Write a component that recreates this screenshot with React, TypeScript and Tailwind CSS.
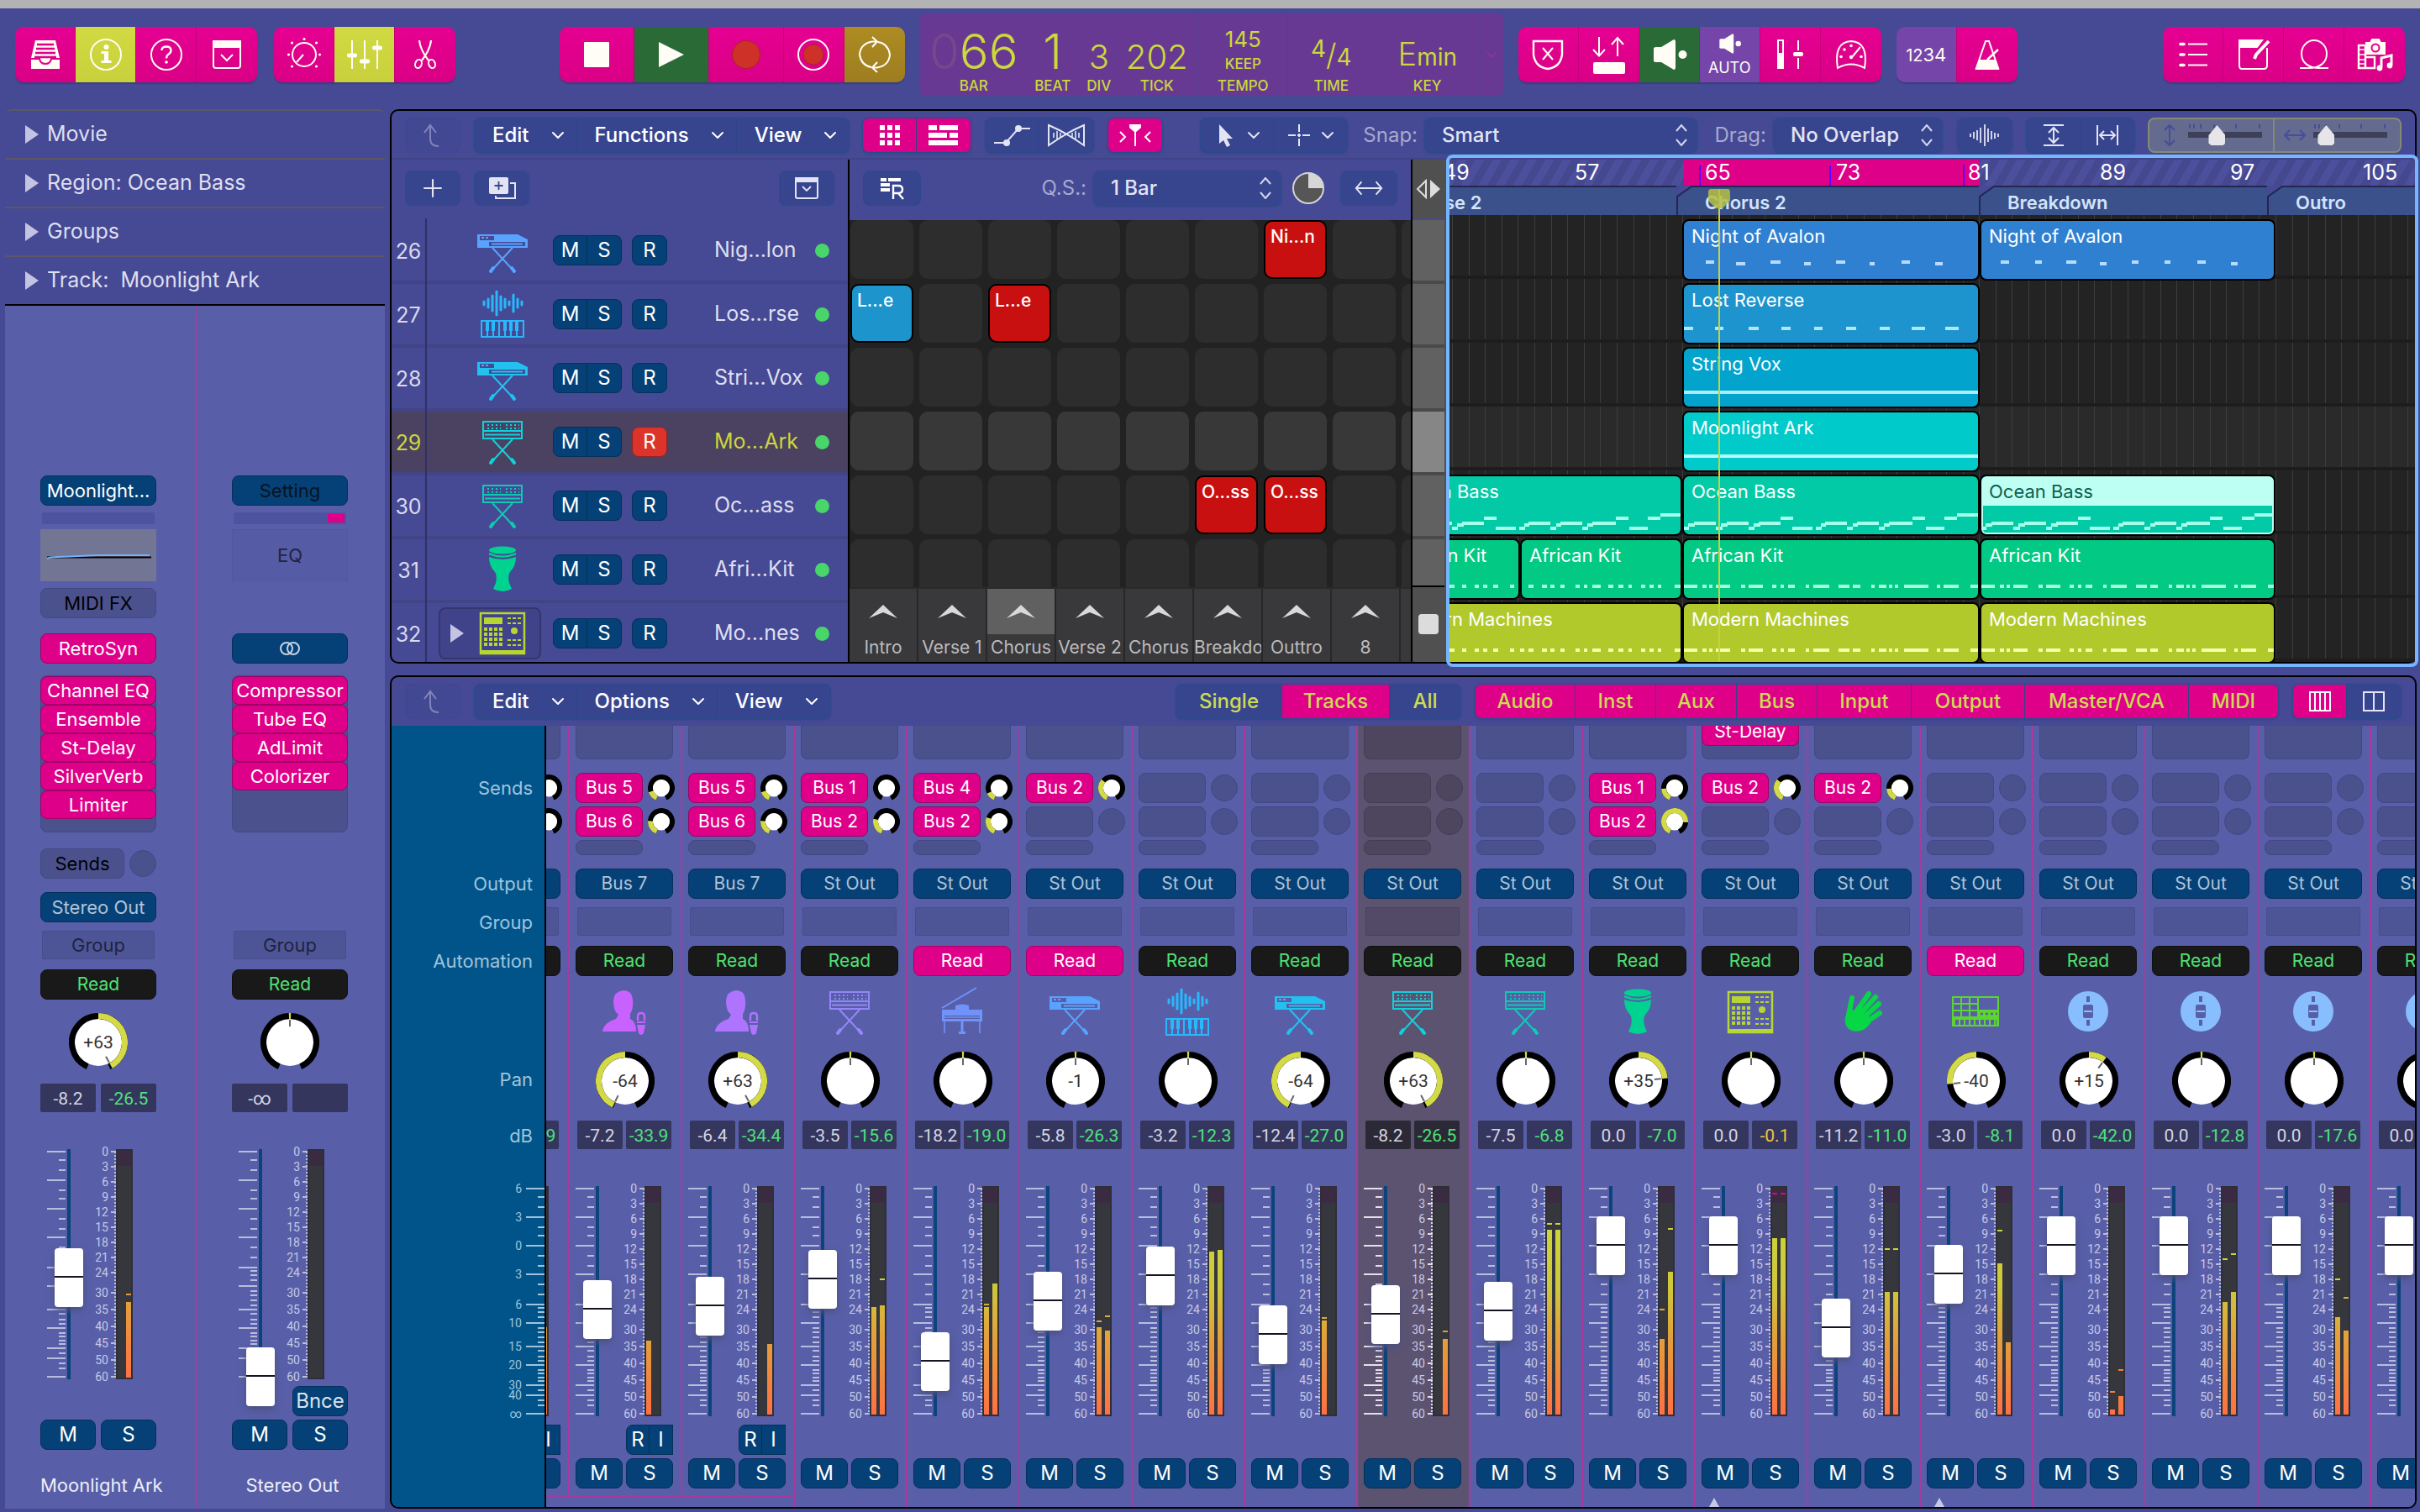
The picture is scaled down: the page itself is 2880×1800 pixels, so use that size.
import React from 'react';
import { ChevronDown, Plus } from 'lucide-react';
import clsx from 'clsx';

/* ---------- toolbar icons, 40x40 ---------- */

const glyphs: Record<string, React.ReactNode> = {
  library: (
    <>
      <path d="M8 3H32L37 24V37H3V24Z" fill="currentColor" stroke="none" />
      <path d="M10 8H30M9 13H31M8 18H32M7 23H33" stroke="#df0089" strokeWidth="2.4" />
      <path d="M3 25H13Q14 31 20 31Q26 31 27 25H37" stroke="#df0089" strokeWidth="2" />
    </>
  ),
  info: (
    <>
      <circle cx="20" cy="20" r="18" />
      <circle cx="20.5" cy="11" r="3" fill="currentColor" stroke="none" />
      <path d="M14.5 16H23V27H26.5V30H14.5V27H18V19H14.5Z" fill="currentColor" stroke="none" />
    </>
  ),
  help: (
    <>
      <circle cx="20" cy="20" r="18" />
      <path d="M14.5 15Q14.5 10.5 20 10.5Q25.5 10.5 25.5 15Q25.5 18 22 20Q20 21.5 20 24.5" strokeWidth="2.4" />
      <circle cx="20" cy="29" r="1.8" fill="currentColor" stroke="none" />
    </>
  ),
  panel: (
    <>
      <rect x="4" y="4" width="32" height="32" rx="3" />
      <path d="M4 4H36V11H4Z" fill="currentColor" />
      <path d="M13 20L20 27L27 20" />
    </>
  ),
  knob: (
    <>
      <circle cx="20" cy="20" r="14" />
      <path d="M19 20L11 29" />
      <g fill="currentColor" stroke="none">
        <circle cx="20" cy="1.5" r="1.6" /><circle cx="5.5" cy="6" r="1.6" /><circle cx="34.5" cy="6" r="1.6" />
        <circle cx="1.5" cy="20" r="1.6" /><circle cx="38.5" cy="20" r="1.6" />
        <circle cx="5.5" cy="34" r="1.6" /><circle cx="34.5" cy="34" r="1.6" />
      </g>
    </>
  ),
  mixer: (
    <>
      <path d="M5 3V37M20 3V37M35 3V37" />
      <rect x="-1" y="18.5" width="12" height="5" rx="2" fill="currentColor" stroke="none" />
      <rect x="14" y="25.5" width="12" height="5" rx="2" fill="currentColor" stroke="none" />
      <rect x="29" y="9.5" width="12" height="5" rx="2" fill="currentColor" stroke="none" />
    </>
  ),
  scissors: (
    <>
      <path d="M13 3Q14 14 24 27M27 3Q26 14 16 27" strokeWidth="2.2" />
      <ellipse cx="12" cy="31" rx="3.8" ry="5.2" transform="rotate(20 12 31)" />
      <ellipse cx="28" cy="31" rx="3.8" ry="5.2" transform="rotate(-20 28 31)" />
    </>
  ),
  stop: <rect x="5" y="5" width="30" height="30" rx="1" fill="currentColor" stroke="none" />,
  play: <path d="M5 5L35 20L5 35Z" fill="currentColor" stroke="none" />,
  record: <circle cx="20" cy="20" r="16.5" fill="#ce3127" stroke="#a8242c" strokeWidth="1" />,
  capture: (
    <>
      <circle cx="20" cy="20" r="18" />
      <circle cx="20" cy="20" r="12" fill="#ce3127" stroke="#a8242c" strokeWidth="1" />
    </>
  ),
  cycle: (
    <>
      <path d="M16 35Q4 33 2 20Q3 7 17 4.5H23M17 -1L23 4.5L17 11" />
      <path d="M24 5Q36 7 38 20Q37 33 23 35.5H17M23 29L17 35.5L23 41" />
    </>
  ),
  shield: (
    <>
      <path d="M3 4H37V20Q35 35 20 37Q5 35 3 20Z" strokeWidth="2.4" />
      <path d="M14 12L26 26M26 12L14 26" />
    </>
  ),
  replace: (
    <>
      <path d="M9 -1V21M2 14L9 21.5L16 14M31 22V0M24 8L31 0L38 8" />
      <rect x="2" y="29" width="38" height="14" rx="2" fill="currentColor" stroke="none" />
    </>
  ),
  speaker: (
    <>
      <path d="M2 13Q2 11 5 11H11L26 2Q28 2 28 5V35Q28 38 26 38L11 29H5Q2 29 2 27Z" fill="currentColor" stroke="none" />
      <circle cx="36.5" cy="20" r="5" fill="currentColor" stroke="none" />
    </>
  ),
  fader: (
    <>
      <rect x="6" y="3" width="6" height="33" />
      <path d="M6 19H12V36H6Z" fill="currentColor" />
      <path d="M30 3V15M30 24V37" />
      <rect x="24" y="17" width="12" height="5" rx="2" fill="currentColor" stroke="none" />
    </>
  ),
  gauge: (
    <>
      <path d="M4 36Q-1 5 20 4Q41 5 36 36Q20 27 4 36Z" />
      <path d="M21 23L31 11" />
      <g fill="currentColor" stroke="none">
        <circle cx="20" cy="9.5" r="1.8" /><circle cx="12" cy="14" r="1.8" /><circle cx="8" cy="22.5" r="1.8" />
        <circle cx="32" cy="22.5" r="1.8" /><circle cx="20" cy="23" r="2.2" />
      </g>
    </>
  ),
  metronome: (
    <>
      <path d="M18 4H22L33 36H7Z" />
      <path d="M11 27H29L33 37H7Z" fill="currentColor" />
      <path d="M20 26L33 14" strokeWidth="2.4" />
    </>
  ),
  list: (
    <>
      <path d="M14 7.5H37M14 20H37M14 32.5H37" />
      <path d="M5 7.5H9M5 20H9M5 32.5H9" strokeWidth="3.6" strokeLinecap="round" />
    </>
  ),
  notepad: (
    <>
      <path d="M36 12V33Q36 37 32 37H6Q3 37 3 33V6Q3 3 6 3H30" />
      <path d="M3 3H30L24 11H3Z" fill="currentColor" />
      <path d="M38 4L23 20L21 25" strokeWidth="4" />
    </>
  ),
  loop: <path d="M3 36H14C26 36 35 30 35 19A15 16 0 1 0 5 19C5 30 14 36 26 36H37" />,
  media: (
    <>
      <path d="M1 9H9V36H1ZM9 23H20V36H9" strokeWidth="2.4" />
      <path d="M1 14H9M1 20H9M1 26H9M1 31H9" strokeWidth="1.6" />
      <path d="M10 6H15L17 2H25L27 6H32V19H10Z" fill="currentColor" />
      <circle cx="21" cy="12" r="4.5" stroke="#df0089" strokeWidth="2" />
      <path d="M28 35V24L40 21V32" strokeWidth="3" />
      <circle cx="26" cy="36" r="3.4" fill="currentColor" stroke="none" />
      <circle cx="38" cy="33" r="3.4" fill="currentColor" stroke="none" />
    </>
  ),
  back: <path d="M17 9V24Q17 33 27 33M10 17L17 8L24 17" />,
  dots: (
    <path
      d="M8 8H14V14H8ZM17 8H23V14H17ZM26 8H32V14H26ZM8 17H14V23H8ZM17 17H23V23H17ZM26 17H32V23H26ZM8 26H14V32H8ZM17 26H23V32H17ZM26 26H32V32H26Z"
      fill="currentColor"
      stroke="none"
    />
  ),
  bricks: (
    <path
      d="M2 8H12V14H2ZM15 8H37V14H15ZM2 17H24V23H2ZM27 17H37V23H27ZM2 26H37V32H2Z"
      fill="currentColor"
      stroke="none"
    />
  ),
  automation: (
    <>
      <path d="M-2 29H12L27 12H41" />
      <circle cx="13" cy="29" r="4" fill="currentColor" stroke="none" />
      <circle cx="27" cy="12" r="4" fill="currentColor" stroke="none" />
    </>
  ),
  flex: (
    <>
      <path d="M-1 8Q20 17 41 32V8Q20 17 -1 32Z" />
      <path d="M5 17V23M9 15V25M13 17V23M27 17V23M31 15V25M35 17V23" strokeWidth="1.6" />
    </>
  ),
  catch: (
    <>
      <path d="M13 7H27V11L20 17L13 11Z" fill="currentColor" stroke="none" />
      <path d="M20 12V33M2 16L8 22L2 28M38 16L32 22L38 28" />
    </>
  ),
  pointer: <path d="M11 7V30L16 26L20 34L24 32L20 24H27Z" fill="currentColor" stroke="none" />,
  cross: <path d="M18 7V16M18 24V33M5 20H14M22 20H31M16 20H20M18 18V22" />,
  wave: <path d="M3 18V22M7 16V24M11 14V26M15 11V29M20 7V33M24 12V28M28 15V25M32 17V24M36 18V22" strokeWidth="1.8" />,
  fitV: <path d="M8 8H32M8 32H32M20 11V29M14 17L20 11L26 17M14 23L20 29L26 23" />,
  fitH: <path d="M8 8V32M32 8V32M11 20H29M16 15L11 20L16 25M24 15L29 20L24 25" />,
  duplicate: (
    <>
      <rect x="5" y="7" width="23" height="20" rx="2" fill="currentColor" stroke="none" />
      <path d="M16.5 12V22M11.5 17H21.5" stroke="#37458f" strokeWidth="1.8" />
      <path d="M30 14H36V32H13V29" />
    </>
  ),
  panelSmall: (
    <>
      <rect x="7" y="8" width="26" height="24" rx="2" />
      <path d="M7 8H33V12H7Z" fill="currentColor" />
      <path d="M15 18L20 23L25 18" strokeWidth="1.8" />
    </>
  ),
  ranger: (
    <>
      <path d="M6 8H13V12H6ZM15 8H30V12H15ZM6 14H17V18H6ZM6 20H17V24H6Z" fill="currentColor" stroke="none" />
      <path d="M21 33V17H27Q32 17 32 21.5Q32 26 27 26H21M27 26L33 33" strokeWidth="2.4" />
    </>
  ),
  arrows: <path d="M4 20H36M11 12L4 20L11 28M29 12L36 20L29 28" />,
  narrow: <path d="M8 9H32V31H8ZM14 9V31M20 9V31M26 9V31" />,
  wide: <path d="M8 9H32V31H8ZM20 9V31" />,
};

function Glyph({ name, size = 40 }: { name: string; size?: number }) {
  return (
    <svg width={size} height={size} viewBox="0 0 40 40" fill="none" stroke="currentColor" strokeWidth="2" className="shrink-0 overflow-visible">
      {glyphs[name]}
    </svg>
  );
}

/* ---------- instrument icons, 60x60 ---------- */

const stand = (
  <>
    <path d="M18 27L43 54M42 27L17 54" stroke="currentColor" strokeWidth="2" />
    <path d="M16 55L19 51M44 55L41 51" stroke="currentColor" strokeWidth="4" strokeLinecap="round" />
  </>
);

const instruments: Record<string, React.ReactNode> = {
  keyboard: (
    <>
      <path d="M0 11H48L60 17V27H0ZM14 20V25H57V20ZM3 13V18H20V13Z" fill="currentColor" fillRule="evenodd" />
      <path d="M5 15H8M10 15H13M17 22.5H54" stroke="currentColor" strokeWidth="2" />
      {stand}
    </>
  ),
  synth: (
    <>
      <path d="M7 6H53V26H7ZM7 17H53" stroke="currentColor" strokeWidth="2" />
      <path d="M12 10H28M34 10H50M12 14H28M34 14H50" stroke="currentColor" strokeWidth="2" strokeDasharray="2 3" />
      <path d="M9 21.5H51" stroke="currentColor" strokeWidth="2" />
      {stand}
    </>
  ),
  waveKeys: (
    <>
      <path d="M8 15V19M13 12V22M18 8V26M23 3V31M28 9V25M33 12V22M38 15V19M43 7V27M48 12V22M53 15V19" stroke="currentColor" strokeWidth="3" strokeLinecap="round" />
      <path d="M5 38H55V57H5ZM12 38V57M19 38V57M26 38V57M33 38V57M40 38V57M47 38V57" stroke="currentColor" strokeWidth="2" />
      <path d="M12 38V50M19 38V50M33 38V50M40 38V50M47 38V50" stroke="currentColor" strokeWidth="4" />
    </>
  ),
  djembe: (
    <>
      <ellipse cx="30" cy="7" rx="16" ry="4.5" fill="currentColor" />
      <path d="M14 10Q30 17 46 10V12.5Q30 19 14 12.5ZM14 15Q30 21 46 15Q46 26 39 33Q36 37 38 46L41 53Q30 59 19 53L22 46Q24 37 21 33Q14 26 14 15Z" fill="currentColor" />
    </>
  ),
  mpc: (
    <>
      <path d="M4 6H56V54H4Z" stroke="currentColor" strokeWidth="2.5" />
      <path d="M4 50H56V55H4ZM8 11H30V19H8Z" fill="currentColor" />
      <path d="M8 25H30M8 31H30M8 37H30M8 43H30" stroke="currentColor" strokeWidth="4" strokeDasharray="4 2" />
      <path d="M36 12H52M36 18H52M36 38H52M36 44H52" stroke="currentColor" strokeWidth="2" strokeDasharray="4 2" />
      <circle cx="44" cy="27" r="4" fill="currentColor" />
    </>
  ),
  piano: (
    <>
      <path d="M6 25L47 1" stroke="currentColor" strokeWidth="2" />
      <path d="M6 27H22V22Q30 19 38 22V27H54V41H6ZM9 34V38H51V34Z" fill="currentColor" fillRule="evenodd" />
      <path d="M9 36H51M9 41V55M51 41V55" stroke="currentColor" strokeWidth="1.6" />
      <path d="M30 41V54M26 54.5H34" stroke="currentColor" strokeWidth="3" />
    </>
  ),
  singer: (
    <>
      <path d="M29 4Q39 4 40 15Q41 26 37 32V38Q44 41 44 53H4Q5 43 20 38L23 33Q17 29 17 16Q18 5 29 4Z" fill="currentColor" />
      <path d="M46 40V35Q46 31 50 31Q54 31 54 35V40" stroke="currentColor" strokeWidth="2.4" />
      <path d="M45 41H55V43H45ZM45 45H55L53 55Q50 59 47 55Z" fill="currentColor" />
    </>
  ),
  hand: (
    <>
      <path d="M9 36Q13 28 20 27L32 33L42 37Q38 48 28 52Q15 55 10 46Q8 42 9 36Z" fill="currentColor" />
      <path d="M12 38L17 13M21 31L37 8M26 33L45 12M30 37L49 20M32 43L50 31" stroke="currentColor" strokeWidth="6" strokeLinecap="round" />
    </>
  ),
  drumGrid: (
    <>
      <path d="M3 12H57V46H3ZM13 12V35M23 12V35M33 12V35M3 20H33M3 28H57M3 36H57" stroke="currentColor" strokeWidth="2" />
      <path d="M33 28H57V37H33ZM3 35H57V46H3Z" fill="currentColor" />
      <path d="M6 42H55" stroke="#585fa8" strokeWidth="6" strokeDasharray="4 2" />
      <path d="M36 32H56" stroke="#585fa8" strokeWidth="2.5" strokeDasharray="3 3" />
    </>
  ),
  channel: (
    <>
      <circle cx="30" cy="29" r="24" fill="currentColor" />
      <path d="M28 11H32V18H28ZM28 39H32V46H28Z" fill="#585fa8" />
      <rect x="24" y="21" width="12" height="16" rx="2" fill="#585fa8" />
      <path d="M25 29H35" stroke="currentColor" strokeWidth="2" />
    </>
  ),
};

function Instrument({ name, color }: { name: string; color: string }) {
  return (
    <svg width="60" height="60" viewBox="0 0 60 60" fill="none" style={{ color }}>
      {instruments[name]}
    </svg>
  );
}

/* ---------- small shared controls ---------- */

const toolTones: Record<string, string> = {
  pink: 'bg-gradient-to-b from-[#e60092] to-[#d90085]',
  lime: 'bg-gradient-to-b from-[#d1da42] to-[#c8d13b]',
  green: 'bg-[#296a37]',
  gold: 'bg-gradient-to-b from-[#ae8c23] to-[#9d7d1f]',
  purple: 'bg-[#7645a9]',
};

function Tool({ icon, tone = 'pink', wide, label, children }: { icon?: string; tone?: string; wide?: boolean; label: string; children?: React.ReactNode }) {
  return (
    <button
      aria-label={label}
      className={clsx(
        'flex h-full flex-col items-center justify-center border-r border-[#c40079] text-[#fffdf5] last:border-r-0',
        wide ? 'w-[89px]' : 'w-[72px]',
        toolTones[tone],
      )}
    >
      {icon && <Glyph name={icon} />}
      {children}
    </button>
  );
}

function ToolGroup({ children }: { children: React.ReactNode }) {
  return <div className="flex h-[66px] shrink-0 overflow-hidden rounded-[10px] shadow-[0_2px_1px_#3a3d80]">{children}</div>;
}

function BarGroup({ children }: { children: React.ReactNode }) {
  return (
    <div className="flex h-[42px] shrink-0 divide-x divide-[#2d4587] overflow-hidden rounded-lg border border-[#2c4a8b] bg-[#37458f] text-[#e3e4f3] shadow-[0_1px_2px_#2c4a8b]">
      {children}
    </div>
  );
}

function BarButton({ icon, on, label }: { icon: string; on?: boolean; label: string }) {
  return (
    <button aria-label={label} className={clsx('flex w-16 items-center justify-center', on && 'bg-[#df0089] text-white')}>
      <Glyph name={icon} />
    </button>
  );
}

function MenuButton({ text }: { text: string }) {
  return (
    <button className="flex items-center gap-[22px] pr-[10px] pl-[21px] text-2xl font-medium text-white">
      {text}
      <ChevronDown size={24} strokeWidth={2} />
    </button>
  );
}

function UpDown() {
  return (
    <svg width="16" height="26" viewBox="0 0 16 26" fill="none" stroke="#d4d6ee" strokeWidth="2" className="pointer-events-none absolute top-2 right-[11px]">
      <path d="M2 8L8 1L14 8M2 18L8 25L14 18" />
    </svg>
  );
}

function Picker({ label, id, value, className }: { label: string; id: string; value: string; className: string }) {
  return (
    <>
      <label htmlFor={id} className="mr-2 text-2xl whitespace-nowrap text-[#a7a9d0]">{label}</label>
      <div className={clsx('relative h-[42px]', className)}>
        <select id={id} className="h-full w-full appearance-none rounded-lg border border-[#2c4a8b] bg-[#37458f] pl-[20px] text-2xl font-medium text-[#e3e4f3] shadow-[0_1px_2px_#2c4a8b]">
          <option>{value}</option>
        </select>
        <UpDown />
      </div>
    </>
  );
}

/* ---------- control bar ---------- */

function LcdCell({ value, label, className, big }: { value: React.ReactNode; label: string; className: string; big?: boolean }) {
  return (
    <div className={clsx('flex flex-col items-center justify-end pb-[2px]', className)}>
      <span className={clsx('whitespace-nowrap', big ? 'text-[58px] leading-[58px] font-light' : 'text-[40px] leading-[44px] font-light')}>{value}</span>
      <span className="mt-[2px] text-[17px] leading-5 font-medium">{label}</span>
    </div>
  );
}

function ControlBar() {
  return (
    <header className="flex h-[110px] items-center px-[18px]">
      <ToolGroup>
        <Tool icon="library" label="Library" />
        <Tool icon="info" tone="lime" label="Inspector" />
        <Tool icon="help" label="Quick Help" />
        <Tool icon="panel" label="Toolbar" />
      </ToolGroup>
      <div className="w-5" />
      <ToolGroup>
        <Tool icon="knob" label="Smart Controls" />
        <Tool icon="mixer" tone="lime" label="Mixer" />
        <Tool icon="scissors" label="Editors" />
      </ToolGroup>
      <div className="grow-[5]" />
      <ToolGroup>
        <Tool icon="stop" wide label="Stop" />
        <Tool icon="play" tone="green" wide label="Play" />
        <Tool icon="record" wide label="Record" />
        <Tool icon="capture" label="Capture" />
        <Tool icon="cycle" tone="gold" label="Cycle" />
      </ToolGroup>
      <div className="ml-[18px] flex h-[98px] rounded-md bg-[#673993] text-[#ccd83b]">
        <div className="flex border-r border-[#5a3c92] pl-[5px]">
          <LcdCell big className="w-[118px]" value={<><span className="text-[#77478b]">0</span>66</>} label="BAR" />
          <LcdCell big className="w-[70px]" value="1" label="BEAT" />
          <LcdCell className="w-10" value="3" label="DIV" />
          <LcdCell className="w-[98px]" value="202" label="TICK" />
        </div>
        <div className="flex w-[106px] flex-col items-center justify-end border-r border-[#5a3c92] pb-[2px] text-[17px] leading-5 font-medium">
          <span className="text-[26px] leading-[28px] font-normal">145</span>
          <span className="mt-[5px]">KEEP</span>
          <span className="mt-[6px]">TEMPO</span>
        </div>
        <LcdCell
          className="w-[104px] border-r border-[#5a3c92]"
          value={<span className="text-[28px] font-normal"><span className="align-super">4</span><span className="text-[36px] font-light">/</span>4</span>}
          label="TIME"
        />
        <LcdCell className="w-[125px] border-r border-[#5a3c92]" value={<span className="text-[38px]">E<span className="text-[28px] font-normal">min</span></span>} label="KEY" />
        <button aria-label="Display mode" className="flex w-[27px] items-center justify-center text-[#9a2f9d]">
          <ChevronDown size={20} />
        </button>
      </div>
      <div className="w-[18px]" />
      <ToolGroup>
        <Tool icon="shield" label="Low Latency" />
        <Tool icon="replace" label="Replace" />
        <Tool icon="speaker" tone="green" label="Input Monitoring" />
        <Tool tone="purple" label="Auto Input Monitoring">
          <Glyph name="speaker" size={26} />
          <span className="mt-[6px] text-lg leading-5">AUTO</span>
        </Tool>
        <Tool icon="fader" label="Solo" />
        <Tool icon="gauge" label="Tuner" />
      </ToolGroup>
      <div className="w-[18px]" />
      <ToolGroup>
        <Tool tone="purple" label="Count In"><span className="text-[22px]"><span className="text-xl">12</span>34</span></Tool>
        <Tool icon="metronome" label="Metronome" />
      </ToolGroup>
      <div className="grow-[7]" />
      <ToolGroup>
        <Tool icon="list" label="List Editors" />
        <Tool icon="notepad" label="Note Pads" />
        <Tool icon="loop" label="Apple Loops" />
        <Tool icon="media" label="Browsers" />
      </ToolGroup>
    </header>
  );
}

/* ---------- channel strip parts ---------- */

function arc(c: number, r: number, from: number, to: number) {
  const point = (deg: number) => {
    const rad = ((deg - 90) * Math.PI) / 180;
    return `${(c + r * Math.cos(rad)).toFixed(2)} ${(c + r * Math.sin(rad)).toFixed(2)}`;
  };
  return `M${point(from)}A${r} ${r} 0 ${to - from > 180 ? 1 : 0} 1 ${point(to)}`;
}

function PanKnob({ value = 0 }: { value?: number }) {
  const angle = (value / 64) * 154;
  const small = Math.abs(value) < 2;
  return (
    <div className="relative h-[70px] w-[70px]">
      <svg width="70" height="70" viewBox="0 0 70 70" fill="none">
        <circle cx="35" cy="35" r="28" fill="#fff" />
        <path d={arc(35, 31.5, -156, 156)} stroke="#000" strokeWidth="7" />
        <path d={small ? arc(35, 31.5, -2, 2) : arc(35, 31.5, Math.min(0, angle), Math.max(0, angle))} stroke="#d4da46" strokeWidth="7" />
        <path d="M35 8V16" stroke="#666" strokeWidth="2" transform={`rotate(${small ? 0 : angle} 35 35)`} />
      </svg>
      {value !== 0 && (
        <span className="absolute inset-0 flex items-center justify-center pt-[2px] font-['Roboto',sans-serif] text-[21px] text-[#333]">
          {value > 0 ? `+${value}` : value}
        </span>
      )}
    </div>
  );
}

function SendKnob({ level }: { level: number }) {
  return (
    <svg width="32" height="32" viewBox="0 0 32 32" fill="none">
      <circle cx="16" cy="16" r="10.5" fill="#fff" />
      <path d={arc(16, 13, -156, 156)} stroke="#000" strokeWidth="6" />
      {level > 0 && <path d={arc(16, 13, -156, -156 + level * 312)} stroke="#d4da46" strokeWidth="6" />}
    </svg>
  );
}

const longTicks = [3, 37, 71, 105, 141, 163, 191, 213, 237, 249, 271];
const shortTicks = [13, 25, 49, 59, 83, 95, 117, 129, 145, 150, 156, 169, 174, 180, 186, 196, 203, 208, 219, 223, 228, 232, 243, 255, 261];
const meterScale: [string, number][] = [
  ['0', 3], ['3', 21], ['6', 39], ['9', 57], ['12', 75], ['15', 93], ['18', 111], ['21', 129],
  ['24', 147], ['30', 171], ['35', 191], ['40', 211], ['45', 231], ['50', 251], ['60', 271],
];

type Meter = { l?: number; r?: number; pl?: number; pr?: number; clip?: boolean };

function levelColor(y: number) {
  return y < 120 ? '#ccd33b' : y < 170 ? '#dcae38' : y < 215 ? '#e39a3c' : '#f07f40';
}

function Fader({ line, meter, bright, name }: { line: number; meter: Meter; bright?: boolean; name: string }) {
  const tick = bright ? '#e4dfe9' : '#b9bddd';
  return (
    <div className="relative h-[274px]">
      <svg width="102" height="274" viewBox="0 0 102 274" className="block overflow-visible">
        <defs>
          <linearGradient id="level" gradientUnits="userSpaceOnUse" x1="0" y1="40" x2="0" y2="272">
            <stop offset="0" stopColor="#cbd63b" />
            <stop offset=".35" stopColor="#cfc73b" />
            <stop offset=".6" stopColor="#e2a13b" />
            <stop offset="1" stopColor="#ff7043" />
          </linearGradient>
        </defs>
        {longTicks.map((y) => <rect key={y} x="0" y={y - 1} width="22" height="2" fill={tick} />)}
        {shortTicks.map((y) => <rect key={y} x="14" y={y - 1} width="8" height="2" fill={tick} />)}
        <rect x="24" y="0" width="4" height="274" fill="#0b437a" />
        <path d="M81 3V272" stroke={tick} strokeWidth="2" strokeDasharray="2 2" />
        {meterScale.map(([text, y]) => (
          <g key={text}>
            <rect x="76" y={y - 1} width="6" height="2" fill={tick} />
            <text x="73" y={y + 5} textAnchor="end" fontSize="14" fill="#c6c9e6" fontFamily="Roboto, sans-serif">{text}</text>
          </g>
        ))}
        <rect x="82" y="0" width="20" height="274" fill="#2f2f37" />
        <rect x="84" y="2" width="16" height="18" fill="#3a2b42" />
        <rect x="84" y="20" width="16" height="252" fill="#36363d" />
        {meter.l !== undefined && <rect x="84" y={meter.l} width="6" height={272 - meter.l} fill="url(#level)" />}
        {meter.r !== undefined && <rect x="94" y={meter.r} width="6" height={272 - meter.r} fill="url(#level)" />}
        {meter.pl !== undefined && <rect x="84" y={meter.pl - 1} width="6" height="2" fill={meter.clip ? '#df0089' : levelColor(meter.pl)} />}
        {meter.pr !== undefined && <rect x="94" y={meter.pr - 1} width="6" height="2" fill={meter.clip ? '#df0089' : levelColor(meter.pr)} />}
      </svg>
      {/* the thumb travels past both ends of the scale */}
      <input
        type="range"
        aria-label={`${name} volume`}
        min={0}
        max={272}
        defaultValue={273 - line}
        className="absolute -top-8 left-[9px] h-[342px] w-[34px] appearance-none bg-transparent [direction:rtl] [writing-mode:vertical-lr] [&::-webkit-slider-thumb]:h-[70px] [&::-webkit-slider-thumb]:w-[34px] [&::-webkit-slider-thumb]:appearance-none [&::-webkit-slider-thumb]:rounded [&::-webkit-slider-thumb]:bg-[linear-gradient(#fff_33px,#151525_33px,#151525_35px,#fff_35px)] [&::-webkit-slider-thumb]:shadow-[0_4px_8px_#4b507f]"
      />
    </div>
  );
}

function ReadButton({ pink }: { pink?: boolean }) {
  return (
    <button className={clsx('h-9 w-full rounded-lg border text-[21px]', pink ? 'border-[#a80068] bg-[#df0089] text-white' : 'border-[#111] bg-[#191919] text-[#4fe273]')}>
      Read
    </button>
  );
}

const navy = 'h-9 rounded-lg border border-[#04305c] bg-[#054176]';
const emptyBox = 'rounded-lg border border-[#434884] bg-[#4a518d]';
const emptyBoxOn = 'rounded-lg border border-[#433d54] bg-[#4d465e]';
const pinkSlot = 'flex items-center justify-center rounded-lg border border-[#a00064] bg-[#df0089] whitespace-nowrap text-white';

function Readouts({ db, peak, hot, on, gap }: { db: string; peak: string; hot?: boolean; on?: boolean; gap: string }) {
  const box = clsx("flex-1 rounded-xs text-center leading-9 font-['Roboto',sans-serif] text-[21px]", on ? 'bg-[#2c2936]' : 'bg-[#34365e]');
  return (
    <div className={clsx('flex h-[34px]', gap)}>
      <span className={clsx(box, 'text-[#d4d5e2]')}>{db}</span>
      <span className={clsx(box, hot ? 'text-[#efc344]' : 'text-[#4fe17c]')}>{peak}</span>
    </div>
  );
}

/* ---------- inspector ---------- */

function InspectorStrip({ name, first, setting, inserts, pan, db, peak, line, meter }: {
  name: string; first?: boolean; setting: string; inserts: string[]; pan: number; db: string; peak: string; line: number; meter: Meter;
}) {
  return (
    <div className={clsx('flex w-1/2 flex-col pt-[202px] pl-[42px] text-[22px]', !first && 'border-l-2 border-[#a83a9d]')}>
      <button className={clsx(navy, 'w-[138px]', first ? 'text-white' : 'text-[#061322]')}>{setting}</button>
      <div className="mx-[2px] mt-[8px] flex h-[14px] w-[134px] justify-end rounded-xs bg-[#4e53a0] p-[2px]">
        {!first && <span className="w-5 bg-[#df0089]" />}
      </div>
      {first ? (
        <div className="mt-[6px] h-[62px] w-[138px] bg-[#737595]">
          <svg width="138" height="62" viewBox="0 0 138 62" fill="none">
            <path d="M8 33.5H132" stroke="#000" strokeWidth="2" />
            <path d="M8 35Q12 33 20 33C50 33 50 31 70 31H130" stroke="#73b2f8" strokeWidth="2" />
          </svg>
        </div>
      ) : (
        <button className="mt-[6px] h-[62px] w-[138px] border border-[#5157a0] bg-[#555ba4] text-[#22243f]">EQ</button>
      )}
      {first ? <button className={clsx(emptyBox, 'mt-2 h-9 w-[138px] text-black')}>MIDI FX</button> : <div className="mt-2 h-9" />}
      {first ? (
        <button className={clsx(pinkSlot, 'mt-[18px] h-9 w-[138px]')}>RetroSyn</button>
      ) : (
        <button aria-label="Stereo format" className={clsx(navy, 'mt-[18px] flex w-[138px] items-center justify-center')}>
          <svg width="26" height="18" viewBox="0 0 26 18" fill="none" stroke="#c4d2e4" strokeWidth="2">
            <circle cx="9" cy="9" r="7" /><circle cx="17" cy="9" r="7" />
          </svg>
        </button>
      )}
      <div className={clsx(emptyBox, 'mt-[14px] flex h-[187px] w-[138px] flex-col')}>
        {inserts.map((insert) => <button key={insert} className={clsx(pinkSlot, '-mx-px h-[34px]')}>{insert}</button>)}
      </div>
      {first ? (
        <div className="mt-[19px] flex h-9 w-[138px] items-center justify-between">
          <button className={clsx(emptyBox, 'h-9 w-[100px] text-black')}>Sends</button>
          <span className="h-8 w-8 rounded-full border border-[#434884] bg-[#4a518d]" />
        </div>
      ) : <div className="mt-[19px] h-9" />}
      {first ? <button className={clsx(navy, 'mt-4 w-[138px] text-[#b1c3d8]')}>Stereo Out</button> : <div className="mt-4 h-9" />}
      <button className="mx-[2px] mt-[10px] h-[34px] w-[134px] rounded-xs border border-[#474d8c] bg-[#4e5597] text-[#202340]">Group</button>
      <div className="mt-3 w-[138px]"><ReadButton /></div>
      <div className="mt-4 flex w-[138px] justify-center"><PanKnob value={pan} /></div>
      <div className="mt-[14px] w-[138px]"><Readouts db={db} peak={peak} gap="gap-[6px]" /></div>
      <div className="mt-11 pl-2"><Fader line={line} meter={meter} name={name} /></div>
      <div className="mt-2 flex h-9 w-[138px] justify-end">
        {!first && <button className={clsx(navy, 'w-[66px] text-2xl text-[#dbe3ec]')}>Bnce</button>}
      </div>
      <div className="mt-1 flex w-[138px] gap-[6px] text-2xl text-white">
        <button className={clsx(navy, 'flex-1')}>M</button>
        <button className={clsx(navy, 'flex-1')}>S</button>
      </div>
      <p className="mt-[26px] w-[144px] text-center leading-8 whitespace-nowrap text-[#eceef9]">{name}</p>
    </div>
  );
}

function Inspector() {
  return (
    <aside className="flex w-[452px] shrink-0 flex-col">
      {['Movie', 'Region: Ocean Bass', 'Groups', 'Track:  Moonlight Ark'].map((title) => (
        <button key={title} className="flex h-[58px] items-center gap-[10px] border-t-2 border-[#5b5768] pl-6 text-left text-[25px] whitespace-pre text-[#dedff0] first:rounded-t-lg">
          <svg width="16" height="22" viewBox="0 0 16 22" fill="#c3c4e4"><path d="M0 0L16 11L0 22Z" /></svg>
          {title}
        </button>
      ))}
      <div className="flex flex-1 border-t-2 border-black bg-[#585fa8]">
        <InspectorStrip
          first
          name="Moonlight Ark"
          setting="Moonlight..."
          inserts={['Channel EQ', 'Ensemble', 'St-Delay', 'SilverVerb', 'Limiter']}
          pan={63}
          db="-8.2"
          peak="-26.5"
          line={151}
          meter={{ r: 182, pr: 173 }}
        />
        <InspectorStrip
          name="Stereo Out"
          setting="Setting"
          inserts={['Compressor', 'Tube EQ', 'AdLimit', 'Colorizer']}
          pan={0}
          db="-∞"
          peak=""
          line={269}
          meter={{}}
        />
      </div>
    </aside>
  );
}

/* ---------- tracks area ---------- */

const tracks = [
  { n: 26, name: 'Nig...lon', icon: 'keyboard', color: '#58a3ff' },
  { n: 27, name: 'Los...rse', icon: 'waveKeys', color: '#29b8fb' },
  { n: 28, name: 'Stri...Vox', icon: 'keyboard', color: '#22c1ef' },
  { n: 29, name: 'Mo...Ark', icon: 'synth', color: '#12d0dc', selected: true },
  { n: 30, name: 'Oc...ass', icon: 'synth', color: '#11c9b3' },
  { n: 31, name: 'Afri...Kit', icon: 'djembe', color: '#00d390' },
  { n: 32, name: 'Mo...nes', icon: 'mpc', color: '#b8d631', stack: true },
];

const cells: Record<string, { text: string; blue?: boolean }> = {
  '0-6': { text: 'Ni...n' },
  '1-0': { text: 'L...e', blue: true },
  '1-2': { text: 'L...e' },
  '4-5': { text: 'O...ss' },
  '4-6': { text: 'O...ss' },
};

const scenes = ['Intro', 'Verse 1', 'Chorus', 'Verse 2', 'Chorus', 'Breakdown', 'Outtro', '8'];

/* note = [x, width, y] inside a region */
type Note = [number, number, number];
const avalonA: Note[] = [[28, 10, 47], [64, 11, 49], [105, 12, 47], [145, 8, 49], [183, 11, 47], [223, 6, 49], [261, 10, 47], [301, 9, 49]];
const avalonB: Note[] = [[25, 10, 47], [66, 8, 47], [103, 12, 47], [143, 8, 49], [181, 8, 47], [220, 7, 47], [259, 10, 47], [299, 8, 49]];
const lost: Note[] = [[0, 13, 50], [39, 10, 50], [79, 12, 50], [118, 11, 50], [157, 10, 50], [195, 12, 50], [235, 12, 50], [273, 16, 50], [313, 16, 50]];
const held: Note[] = [[0, 352, 50]];
const ocean: Note[] = [
  [0, 8, 60], [7, 8, 56], [14, 26, 54], [40, 8, 60], [46, 8, 56], [53, 26, 54], [79, 7, 60], [85, 8, 56], [91, 26, 54], [117, 15, 48],
  [131, 24, 60], [159, 7, 60], [165, 6, 56], [170, 26, 54], [196, 7, 60], [203, 6, 56], [208, 26, 54], [234, 7, 60], [240, 7, 56], [246, 28, 54],
  [274, 15, 48], [290, 22, 60], [312, 15, 48], [327, 25, 44],
];
const hits: Note[] = [
  [0, 18], [24, 5], [32, 4], [40, 17], [70, 5], [79, 17], [107, 5], [117, 4], [126, 8], [147, 4], [156, 19], [186, 13], [203, 9],
  [225, 4], [234, 9], [246, 4], [253, 4], [264, 29], [303, 4], [311, 18], [343, 9],
].map(([x, w]) => [x, w, 53]);
const ghosts: Note[] = [
  [76, 6], [91, 5], [106, 5], [116, 5], [128, 6], [148, 5], [160, 5], [170, 6], [186, 6], [196, 5], [208, 5], [226, 5], [236, 4],
  [246, 10], [265, 6], [277, 6], [289, 4], [304, 5], [314, 5], [324, 4], [344, 9],
].map(([x, w]) => [x, w, 53]);
const kitGhosts: Note[] = ghosts.filter(([x]) => x > 165).map(([x, w, y]) => [x - 160, w, y]);

type Region = { x: number; w: number; name: string; notes: Note[]; selected?: boolean };
const lanes: { color: string; note: string; regions: Region[] }[] = [
  { color: '#2f80d1', note: '#b5dcff', regions: [{ x: 277, w: 354, name: 'Night of Avalon', notes: avalonA }, { x: 631, w: 352, name: 'Night of Avalon', notes: avalonB }] },
  { color: '#1d94cd', note: '#b1e6ff', regions: [{ x: 277, w: 354, name: 'Lost Reverse', notes: lost }] },
  { color: '#02a3cc', note: '#a9ecff', regions: [{ x: 277, w: 354, name: 'String Vox', notes: held }] },
  { color: '#01cacb', note: '#b4fffd', regions: [{ x: 277, w: 354, name: 'Moonlight Ark', notes: held }] },
  {
    color: '#02caa7',
    note: '#a6ffe9',
    regions: [
      { x: -76, w: 353, name: 'Ocean Bass', notes: ocean },
      { x: 277, w: 354, name: 'Ocean Bass', notes: ocean },
      { x: 631, w: 352, name: 'Ocean Bass', notes: ocean, selected: true },
    ],
  },
  {
    color: '#02c984',
    note: '#a5ffd9',
    regions: [
      { x: -76, w: 160, name: 'African Kit', notes: ghosts.filter(([x]) => x < 155) },
      { x: 84, w: 193, name: 'African Kit', notes: kitGhosts },
      { x: 277, w: 354, name: 'African Kit', notes: hits },
      { x: 631, w: 352, name: 'African Kit', notes: hits },
    ],
  },
  {
    color: '#b2c92c',
    note: '#f6ffa9',
    regions: [
      { x: -76, w: 353, name: 'Modern Machines', notes: ghosts },
      { x: 277, w: 354, name: 'Modern Machines', notes: hits },
      { x: 631, w: 352, name: 'Modern Machines', notes: hits },
    ],
  },
];

function TrackHeader({ track }: { track: (typeof tracks)[number] }) {
  return (
    <div className={clsx('flex h-[76px] items-center border-b-4 border-[#424487] text-[25px] last:h-[72px] last:border-b-0', track.selected && 'bg-[#4b4160]')}>
      <span className={clsx('flex h-[76px] w-[42px] items-center justify-center border-r-2 border-[#2f3068] pt-1', track.selected ? 'text-[#cdd53d]' : 'text-[#d8d9ec]')}>
        {track.n}
      </span>
      <div className={clsx('ml-[14px] flex h-[62px] w-[122px] items-center', track.stack ? 'rounded-lg border-2 border-[#35366f] bg-[#40428a] pl-[12px]' : 'pl-[14px]')}>
        <span className="w-[32px]">
          {track.stack && <svg width="16" height="22" viewBox="0 0 16 22" fill="#c3c4e4"><path d="M0 0L16 11L0 22Z" /></svg>}
        </span>
        <Instrument name={track.icon} color={track.color} />
      </div>
      <div className="ml-[14px] flex text-2xl text-white">
        <button className="h-9 w-[41px] rounded-l-lg border border-[#04305c] bg-[#054176]">M</button>
        <button className="h-9 w-[41px] rounded-r-lg border border-l-0 border-[#04305c] bg-[#054176]">S</button>
      </div>
      <button className={clsx('ml-3 h-9 w-[42px] rounded-lg border text-2xl text-white', track.selected ? 'border-[#8f2328] bg-[#dc342b]' : 'border-[#04305c] bg-[#054176]')}>R</button>
      <span className={clsx('ml-14 w-[120px]', track.selected ? 'text-[#cdd53d]' : 'text-[#dedff0]')}>{track.name}</span>
      <span className="h-[17px] w-[17px] rounded-full bg-[#48d56a]" />
    </div>
  );
}

function LoopGrid() {
  return (
    <div className="flex w-[670px] shrink-0 flex-col border-l-2 border-black">
      <div className="flex h-[72px] items-center px-4 pb-[4px]">
        <button aria-label="Region record" className="flex h-[42px] w-[69px] items-center justify-center rounded-lg border border-[#2c4a8b] bg-[#37458f] text-white">
          <Glyph name="ranger" />
        </button>
        <div className="flex-1" />
        <Picker label="Q.S.:" id="quantize" value="1 Bar" className="w-56" />
        <svg width="40" height="40" viewBox="0 0 40 40" className="mx-3">
          <circle cx="20" cy="20" r="18" fill="#565656" stroke="#d4d4d4" strokeWidth="2" />
          <path d="M20 20V2A18 18 0 0 1 38 20Z" fill="#d6d6d6" />
        </svg>
        <button aria-label="Loop length" className="ml-[6px] flex h-[42px] w-[68px] items-center justify-center rounded-lg border border-[#2c4a8b] bg-[#37458f] text-[#e3e4f3]">
          <Glyph name="arrows" size={38} />
        </button>
      </div>
      <div className="flex h-[437px] flex-col gap-[6px] overflow-hidden bg-[#222] pl-px">
        {[0, 1, 2, 3, 4, 5].map((row) => (
          <div key={row} className="flex shrink-0 gap-[7px] overflow-hidden">
            {[0, 1, 2, 3, 4, 5, 6, 7, 8].map((col) => {
              const cell = cells[`${row}-${col}`];
              return (
                <div
                  key={col}
                  className={clsx(
                    'h-[70px] w-[75px] shrink-0 rounded-[10px] pt-[2px] pl-[6px] text-[21px] font-medium whitespace-nowrap text-white',
                    cell ? (cell.blue ? 'border-2 border-black bg-[#1e94cd]' : 'border-2 border-black bg-[#c81010]') : row === 3 ? 'bg-[#383838]' : 'bg-[#2d2d2d]',
                  )}
                >
                  {cell?.text}
                </div>
              );
            })}
          </div>
        ))}
      </div>
      <div className="flex flex-1 border-t-2 border-[#2a2a2a] bg-[#39393c]">
        {scenes.map((scene, i) => (
          <button key={i} className="flex w-[82px] shrink-0 flex-col items-center overflow-hidden border-r-2 border-[#27272a] text-[21px] text-[#bcbcbe]">
            <span className={clsx('flex h-[54px] w-full items-center justify-center', i === 2 && 'bg-[#606060]')}>
              <svg width="34" height="16" viewBox="0 0 34 16" fill="#d9d9d9"><path d="M17 0L34 16L17 9L0 16Z" /></svg>
            </span>
            <span className="flex h-8 w-full items-center justify-center overflow-hidden whitespace-nowrap">
              <span className={clsx(i === 5 && 'w-full text-left')}>{scene}</span>
            </span>
          </button>
        ))}
      </div>
    </div>
  );
}

function DividerColumn() {
  return (
    <div className="flex w-[46px] shrink-0 flex-col border-x-2 border-black bg-[#505050] pr-1">
      <div className="flex h-[72px] items-center justify-center border-b-2 border-[#464994]">
        <svg width="30" height="24" viewBox="0 0 30 24"><path d="M12 2V22L2 12Z" fill="none" stroke="#ddd" strokeWidth="2" /><path d="M17 1V23L29 12Z" fill="#ddd" /></svg>
      </div>
      <div className="h-[437px] overflow-hidden border-b-2 border-black">
        {tracks.map((t) => <div key={t.n} className={clsx('h-[76px] border-b-4 border-[#4a4a4a]', t.selected ? 'bg-[#868686]' : 'bg-[#616161]')} />)}
      </div>
      <div className="flex flex-1 items-center justify-center pb-[2px]">
        <button aria-label="Stop all" className="h-6 w-6 rounded-sm bg-[#dcdcdc]" />
      </div>
    </div>
  );
}

function Marker({ x, w, text }: { x: number; w: number; text: string }) {
  return (
    <div className="absolute top-0 h-full overflow-hidden" style={{ left: x, width: w }}>
      <svg width="700" height="38" viewBox="0 0 700 38" className="absolute top-0 left-0">
        <path d="M1 40V13L18 1H720V40Z" fill="#3a518b" stroke="#23264f" strokeWidth="2" />
      </svg>
      <span className="relative pl-[34px] text-[22px] leading-10 font-semibold whitespace-nowrap text-[#d3e4fb]">{text}</span>
    </div>
  );
}

function Timeline() {
  return (
    <div className="relative min-w-0 flex-1">
      <div className="relative flex h-full flex-col overflow-hidden">
        <div className="relative h-[34px] bg-[repeating-linear-gradient(120deg,#45488f_0_9px,#4c4f9c_9px_18px)] text-[25px] leading-[31px] text-white">
          <div className="absolute top-0 left-[279px] h-full w-[351px] bg-[#df0089]" />
          {[297, 452, 611].map((x) => <div key={x} className="absolute top-[6px] h-[28px] w-[2px] bg-[#5a00ff]" style={{ left: x }} />)}
          {[[-8, 49], [149, 57], [304, 65], [460, 73], [617, 81], [774, 89], [929, 97], [1087, 105]].map(([x, bar]) => (
            <span key={bar} className="absolute top-0" style={{ left: x }}>{bar}</span>
          ))}
        </div>
        <div className="relative h-[38px] bg-[#464994]">
          <Marker x={-90} w={360} text="" />
          <span className="absolute left-[-6px] text-[22px] leading-10 font-semibold whitespace-nowrap text-[#d3e4fb]">se 2</span>
          <Marker x={270} w={360} text="Chorus 2" />
          <Marker x={630} w={343} text="Breakdown" />
          <Marker x={973} w={400} text="Outro" />
        </div>
        {lanes.map((lane, i) => (
          <div key={i} className={clsx('relative h-[76px] shrink-0 overflow-hidden border-b-4 border-[#1d1d1d]', i === 3 ? 'bg-[#2a2a2a]' : 'bg-[#232323]')}>
            <svg width="100%" height="76" className="absolute inset-0">
              {Array.from({ length: 80 }, (_, k) => (
                <rect key={k} x={Math.round(3 + k * 19.6)} y="0" width="1" height="76" fill="#3d3d3d" />
              ))}
            </svg>
          </div>
        ))}
        {/* regions sit on the lanes */}
        {lanes.map((lane, i) => lane.regions.map((r) => (
          <div
            key={`${i}-${r.x}`}
            className="absolute h-[73px] overflow-hidden rounded-lg border-2 border-black"
            style={{ left: r.x, width: r.w, top: 71 + i * 76, backgroundColor: lane.color }}
          >
            {r.selected && <div className="absolute inset-0 rounded-md border-2 border-[#bdfff2]"><div className="h-[33px] bg-[#bdfff2]" /></div>}
            <span className={clsx('relative pl-[9px] text-[22px] leading-9 whitespace-nowrap', r.selected ? 'text-[#0d5f50]' : 'text-white')}>{r.name}</span>
            <svg width={r.w} height="70" className="absolute top-0 left-[-2px]">
              {r.notes.map(([x, w, y], k) => <rect key={k} x={x} y={y} width={w} height="4" fill={lane.note} />)}
            </svg>
          </div>
        )))}
        <div className="absolute top-[35px] bottom-0 left-[320px] w-[2px] bg-[#c7d13d]" />
        <svg width="28" height="28" viewBox="0 0 28 28" className="absolute top-[35px] left-[307px]">
          <path d="M4 0H24Q27 0 27 4V14L18 23H10L1 14V4Q1 0 4 0Z" fill="#b5c043" fillOpacity=".85" />
        </svg>
      </div>
      <div className="pointer-events-none absolute -inset-x-1 -top-[6px] -bottom-[6px] rounded-lg border-4 border-[#75b6ff]" />
    </div>
  );
}

function ZoomSlider({ label, vertical }: { label: string; vertical?: boolean }) {
  return (
    <div className="relative flex w-[149px] items-center pl-[11px]">
      <svg width="26" height="26" viewBox="0 0 26 26" fill="none" stroke="#474c9c" strokeWidth="2" className={clsx('shrink-0', vertical && 'rotate-90')}>
        <path d="M1 13H25M7 7L1 13L7 19M19 7L25 13L19 19" />
      </svg>
      <svg width="90" height="6" viewBox="0 0 90 6" className="absolute top-[6px] left-[46px]">
        <path d="M2 0V5M7 0V5M15 0V5M31 0V5M57 0V5M85 0V5" stroke="#474c9c" strokeWidth="2" />
      </svg>
      <input
        type="range"
        aria-label={label}
        defaultValue={vertical ? 36 : 8}
        className="ml-[9px] h-[30px] w-[88px] appearance-none bg-[linear-gradient(transparent_11px,#3c4059_11px,#3c4059_18px,transparent_18px)] [&::-webkit-slider-thumb]:h-[24px] [&::-webkit-slider-thumb]:w-5 [&::-webkit-slider-thumb]:appearance-none [&::-webkit-slider-thumb]:bg-[#e6e6ea] [&::-webkit-slider-thumb]:[clip-path:polygon(50%_0,100%_50%,100%_90%,85%_100%,15%_100%,0_90%,0_50%)]"
      />
    </div>
  );
}

function TracksPanel() {
  return (
    <section className="flex flex-col rounded-[10px] border-2 border-black">
      <div className="flex h-[58px] items-start border-b-2 border-[#414389] px-4 pt-2">
        <button aria-label="Back" className="mr-4 flex h-[42px] w-[66px] shrink-0 items-center justify-center rounded-lg border border-[#414695] bg-[#434893] text-[#8184bb]">
          <Glyph name="back" />
        </button>
        <BarGroup><MenuButton text="Edit" /><MenuButton text="Functions" /><MenuButton text="View" /></BarGroup>
        <div className="w-[15px]" />
        <BarGroup><BarButton icon="dots" on label="Live Loops" /><BarButton icon="bricks" on label="Tracks" /></BarGroup>
        <div className="w-4" />
        <BarGroup><BarButton icon="automation" label="Automation" /><BarButton icon="flex" label="Flex" /></BarGroup>
        <div className="w-4" />
        <BarGroup><BarButton icon="catch" on label="Catch" /></BarGroup>
        <div className="w-11" />
        <BarGroup>
          {['pointer', 'cross'].map((tool) => (
            <button key={tool} aria-label={tool} className="flex w-[87px] items-center justify-center">
              <Glyph name={tool} />
              <ChevronDown size={24} strokeWidth={2} />
            </button>
          ))}
        </BarGroup>
        <div className="ml-[18px] flex flex-1 items-center">
          <Picker label="Snap:" id="snap" value="Smart" className="flex-1" />
          <div className="w-[21px]" />
          <Picker label="Drag:" id="drag" value="No Overlap" className="w-[202px]" />
        </div>
        <div className="w-[17px]" />
        <BarGroup><BarButton icon="wave" label="Waveform zoom" /></BarGroup>
        <div className="w-4" />
        <BarGroup><BarButton icon="fitV" label="Fit height" /><BarButton icon="fitH" label="Fit width" /></BarGroup>
        <div className="ml-[15px] flex h-[42px] divide-x-2 divide-[#858a76] rounded-lg border-2 border-[#858a76] bg-[#646b8e]">
          <ZoomSlider label="Vertical zoom" vertical />
          <ZoomSlider label="Horizontal zoom" />
        </div>
      </div>
      <div className="flex h-[598px]">
        <div className="flex w-[543px] shrink-0 flex-col overflow-hidden rounded-bl-lg">
          <div className="flex h-[72px] shrink-0 items-center gap-4 px-4 pb-[4px] text-[#e3e4f3]">
            <button aria-label="Add track" className="flex h-[42px] w-[66px] items-center justify-center rounded-lg border border-[#2c4a8b] bg-[#37458f]"><Plus size={34} strokeWidth={1.5} /></button>
            <button aria-label="Duplicate track" className="flex h-[42px] w-[66px] items-center justify-center rounded-lg border border-[#2c4a8b] bg-[#37458f]"><Glyph name="duplicate" /></button>
            <button aria-label="Header options" className="ml-auto flex h-[42px] w-[66px] items-center justify-center rounded-lg border border-[#2c4a8b] bg-[#37458f]"><Glyph name="panelSmall" /></button>
          </div>
          {tracks.map((track) => <TrackHeader key={track.n} track={track} />)}
        </div>
        <LoopGrid />
        <DividerColumn />
        <Timeline />
      </div>
    </section>
  );
}

/* ---------- mixer ---------- */

type Strip = {
  out?: string; sends?: [string, number][]; insert?: string; pink?: boolean; icon: string; color: string;
  pan?: number; db: string; peak: string; hot?: boolean; line: number; meter: Meter; rec?: boolean; on?: boolean; mark?: boolean;
};

const strips: Strip[] = [
  { out: 'Bus 7', sends: [['Bus 5', 0], ['Bus 6', 0]], icon: 'singer', color: '#c862ff', db: '-7.2', peak: '-33.9', line: 145, meter: { r: 168 }, rec: true },
  { out: 'Bus 7', sends: [['Bus 5', 0.15], ['Bus 6', 0.22]], icon: 'singer', color: '#c862ff', pan: -64, db: '-7.2', peak: '-33.9', line: 145, meter: { l: 184 }, rec: true },
  { out: 'Bus 7', sends: [['Bus 5', 0.15], ['Bus 6', 0.22]], icon: 'singer', color: '#af74ff', pan: 63, db: '-6.4', peak: '-34.4', line: 141, meter: { r: 188 }, rec: true },
  { sends: [['Bus 1', 0], ['Bus 2', 0.25]], icon: 'synth', color: '#9487fa', db: '-3.5', peak: '-15.6', line: 109, meter: { l: 144, r: 142, pr: 111 } },
  { sends: [['Bus 4', 0.13], ['Bus 2', 0.27]], pink: true, icon: 'piano', color: '#6f93fb', db: '-18.2', peak: '-19.0', line: 207, meter: { l: 144, r: 116, pl: 141 } },
  { sends: [['Bus 2', 0.34]], pink: true, icon: 'keyboard', color: '#58a3ff', pan: -1, db: '-5.8', peak: '-26.3', line: 135, meter: { l: 168, r: 172, pl: 161, pr: 155 } },
  { icon: 'waveKeys', color: '#29b8fb', db: '-3.2', peak: '-12.3', line: 105, meter: { l: 78, r: 76 } },
  { icon: 'keyboard', color: '#22c1ef', pan: -64, db: '-12.4', peak: '-27.0', line: 175, meter: { l: 160, pl: 157 } },
  { icon: 'synth', color: '#12d0dc', pan: 63, db: '-8.2', peak: '-26.5', line: 151, meter: { r: 182, pr: 173 }, on: true },
  { icon: 'synth', color: '#11c9b3', db: '-7.5', peak: '-6.8', line: 147, meter: { l: 52, r: 52, pl: 45, pr: 45 } },
  { sends: [['Bus 1', 0.2], ['Bus 2', 0.8]], icon: 'djembe', color: '#00d390', pan: 35, db: '0.0', peak: '-7.0', line: 69, meter: { l: 182, r: 102, pl: 147, pr: 51 } },
  { sends: [['Bus 2', 0.34]], insert: 'St-Delay', icon: 'mpc', color: '#b8d631', db: '0.0', peak: '-0.1', hot: true, line: 69, meter: { l: 62, r: 62, pl: 9, pr: 9, clip: true }, mark: true },
  { sends: [['Bus 2', 0.2]], icon: 'hand', color: '#06d744', db: '-11.2', peak: '-11.0', line: 167, meter: { l: 126, r: 126, pl: 75, pr: 75 } },
  { pink: true, icon: 'drumGrid', color: '#5cd52e', pan: -40, db: '-3.0', peak: '-8.1', line: 103, meter: { l: 92, r: 186, pl: 53 }, mark: true },
  { icon: 'channel', color: '#88befd', pan: 15, db: '0.0', peak: '-42.0', line: 69, meter: { l: 266, r: 250, pl: 245, pr: 219 } },
  { icon: 'channel', color: '#88befd', db: '0.0', peak: '-12.8', line: 69, meter: { l: 138, r: 126, pl: 87, pr: 81 } },
  { icon: 'channel', color: '#88befd', db: '0.0', peak: '-17.6', line: 69, meter: { l: 156, r: 172, pl: 111, pr: 133 } },
  { icon: 'channel', color: '#88befd', db: '0.0', peak: '', line: 69, meter: {} },
];

function ChannelStrip({ s, index }: { s: Strip; index: number }) {
  const box = s.on ? emptyBoxOn : emptyBox;
  return (
    <div className={clsx('w-[134px] shrink-0 text-[21px] first:-ml-[108px]', s.on && 'bg-[#5c5371]')}>
      <div className={clsx('flex flex-col border-l-2 border-[#a83a9d] pr-[9px] pl-[7px]', s.rec ? 'h-[918px] border-b-2' : 'h-full')}>
        <div className={clsx(box, 'h-10 shrink-0 rounded-t-none border-t-0')}>
          {s.insert && <button className={clsx(pinkSlot, '-mx-px h-6 w-[116px] rounded-t-none border-t-0 pb-[10px]')}>{s.insert}</button>}
        </div>
        <div className="mt-4 flex flex-col gap-1">
          {[0, 1].map((slot) => {
            const send = s.sends?.[slot];
            return (
              <div key={slot} className="flex h-9 items-center gap-[6px]">
                <button aria-label="Send" className={clsx('h-9 w-20 shrink-0', send ? pinkSlot : box)}>{send?.[0]}</button>
                {send ? <span className="shrink-0"><SendKnob level={send[1]} /></span> : <span className={clsx(box, 'h-8 w-8 shrink-0 rounded-full!')} />}
              </div>
            );
          })}
          <span className={clsx(box, 'h-[18px] w-20')} />
        </div>
        <button className={clsx(navy, 'mt-4 shrink-0 text-[#b1c3d8]')}>{s.out ?? 'St Out'}</button>
        <div className={clsx('mx-[2px] mt-[10px] h-[34px] shrink-0 rounded-xs border', s.on ? 'border-[#494159] bg-[#524a66]' : 'border-[#474d8c] bg-[#4e5597]')} />
        <div className="mt-3"><ReadButton pink={s.pink} /></div>
        <div className="mt-[13px] flex h-[60px] justify-center"><Instrument name={s.icon} color={s.color} /></div>
        <div className="mt-[17px] flex justify-center pl-[2px]"><PanKnob value={s.pan} /></div>
        <div className="mx-[2px] mt-3"><Readouts db={s.db} peak={s.peak} hot={s.hot} on={s.on} gap="gap-1" /></div>
        <div className="mt-11"><Fader line={s.line} meter={s.meter} bright={s.on} name={`Channel ${index}`} /></div>
        <div className="mt-[10px] flex h-9 justify-end text-2xl text-white">
          {s.rec && (
            <>
              <button className="w-7 rounded-l-lg border border-[#04305c] bg-[#054176]">R</button>
              <button className="w-7 border border-l-0 border-[#04305c] bg-[#054176]">I</button>
            </>
          )}
        </div>
        <div className="mt-1 flex gap-1 text-2xl text-white">
          <button className={clsx(navy, 'flex-1')}>M</button>
          <button className={clsx(navy, 'flex-1')}>S</button>
        </div>
        {s.mark && <svg width="12" height="11" viewBox="0 0 12 11" fill="#c6c9e6" className="mt-[11px] ml-[9px]"><path d="M6 0L12 11H0Z" /></svg>}
      </div>
    </div>
  );
}

const faderScale: [string, number][] = [['6', 3], ['3', 37], ['0', 71], ['3', 105], ['6', 141], ['10', 163], ['15', 191], ['20', 213], ['30', 237], ['40', 249], ['∞', 271]];

function MixerLabels() {
  return (
    <div className="flex w-[184px] shrink-0 flex-col overflow-hidden rounded-bl-lg border-r-2 border-black bg-[#00548a] pt-14 text-right text-[22px] leading-9 text-[#9fc4dc] [&>p]:pr-[14px]">
      <p className="h-9">Sends</p>
      <p className="mt-[78px] h-9">Output</p>
      <p className="mt-[10px] h-[34px]">Group</p>
      <p className="mt-3 h-9">Automation</p>
      <p className="mt-[105px] h-9">Pan</p>
      <p className="mt-[31px] h-[34px]">dB</p>
      <svg width="182" height="274" viewBox="0 0 182 274" className="mt-11 block shrink-0 overflow-visible">
        {faderScale.map(([text, y], i) => (
          <g key={i}>
            <rect x="160" y={y - 1} width="22" height="2" fill="#9fc4dc" />
            <text x="155" y={y + 5} textAnchor="end" fontSize="14" fill="#9fc4dc" fontFamily="Roboto, sans-serif">{text}</text>
          </g>
        ))}
        {shortTicks.map((y) => <rect key={y} x="174" y={y - 1} width="8" height="2" fill="#9fc4dc" />)}
      </svg>
    </div>
  );
}

function FilterButton({ text, on, className }: { text: string; on?: boolean; className: string }) {
  return <button className={clsx('text-2xl font-medium text-[#ccdc50]', on && 'bg-[#df0089]', className)}>{text}</button>;
}

function MixerPanel() {
  return (
    <section className="flex min-h-0 flex-1 flex-col overflow-hidden rounded-[10px] border-2 border-black">
      <div className="flex h-[58px] shrink-0 items-start px-4 pt-2">
        <button aria-label="Back" className="mr-4 flex h-[42px] w-[66px] items-center justify-center rounded-lg border border-[#414695] bg-[#434893] text-[#8184bb]">
          <Glyph name="back" />
        </button>
        <BarGroup><MenuButton text="Edit" /><MenuButton text="Options" /><MenuButton text="View" /></BarGroup>
        <div className="flex-1" />
        <BarGroup>
          <FilterButton text="Single" className="w-[126px]" />
          <FilterButton text="Tracks" on className="w-[128px]" />
          <FilterButton text="All" className="w-[84px]" />
        </BarGroup>
        <div className="w-4" />
        <BarGroup>
          <FilterButton text="Audio" on className="w-[119px]" />
          <FilterButton text="Inst" on className="w-24" />
          <FilterButton text="Aux" on className="w-24" />
          <FilterButton text="Bus" on className="w-24" />
          <FilterButton text="Input" on className="w-[112px]" />
          <FilterButton text="Output" on className="w-[135px]" />
          <FilterButton text="Master/VCA" on className="w-[195px]" />
          <FilterButton text="MIDI" on className="w-[106px]" />
        </BarGroup>
        <div className="w-4" />
        <BarGroup><BarButton icon="narrow" on label="Narrow strips" /><BarButton icon="wide" label="Wide strips" /></BarGroup>
      </div>
      <div className="flex min-h-0 flex-1">
        <MixerLabels />
        <div className="flex min-w-0 flex-1 overflow-hidden bg-[#585fa8]">
          {strips.map((s, i) => <ChannelStrip key={i} s={s} index={i} />)}
        </div>
      </div>
    </section>
  );
}

export default function App() {
  return (
    <div className="flex h-screen flex-col overflow-hidden bg-[#464994] font-['Inter',sans-serif]">
      <div className="h-[10px] shrink-0 bg-[#b3b3b3]" />
      <ControlBar />
      <div className="mt-[10px] flex min-h-0 flex-1 gap-[6px] pr-1 pb-1 pl-[6px]">
        <Inspector />
        <main className="flex min-w-0 flex-1 flex-col gap-[14px]">
          <TracksPanel />
          <MixerPanel />
        </main>
      </div>
    </div>
  );
}
